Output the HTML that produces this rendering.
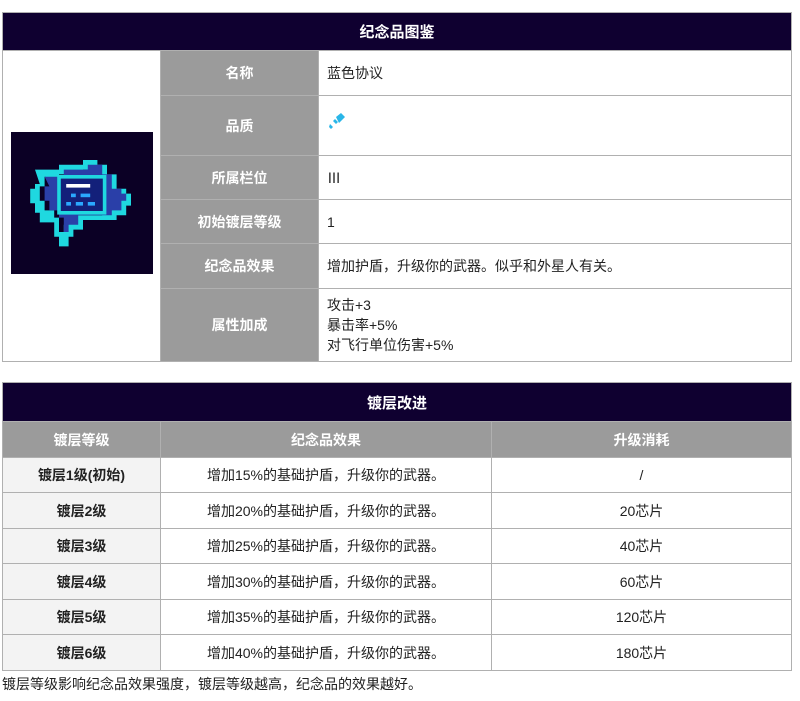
<!DOCTYPE html>
<html><head><meta charset="utf-8"><style>
body{margin:0;width:800px;height:701px;background:#fff;font-family:"Liberation Sans","Noto Sans CJK SC",sans-serif;font-size:14px;color:#222;position:relative;overflow:hidden}
table{border-collapse:collapse;position:absolute;left:2px;width:790px;table-layout:fixed}
td,th{border:1px solid #b0b0b0;padding:0}
.h{background:#0f0030;color:#fff;font-weight:bold;font-size:15px;text-align:center}
.l{background:#9b9b9b;color:#fff;font-weight:bold;text-align:center}
.v{padding-left:8px}
.f{background:#f3f3f3;font-weight:bold;text-align:center}
.c{text-align:center}
</style></head><body>
<table style="top:12px">
<col style="width:158px"><col style="width:158px"><col>
<tr style="height:38px"><td class="h" colspan="3">纪念品图鉴</td></tr>
<tr style="height:45px"><td rowspan="6" style="position:relative">
<svg style="position:absolute;left:8px;top:81px" width="142" height="142" viewBox="0 0 142 142">
<rect width="142" height="142" fill="#0b0025"/>
<g transform="translate(-12,-20) scale(1.2)">
<g fill="#1fd8e0">
<path d="M30 48h20v-4h20v-4h12v4h8v8h8v12h8v4h4v10h-4v8h-8v4h-28v8h-8v6h-4v8h-8v-8h-4v-12h-12v-8h-4v-8h-4v-12h4v-4h4z M38 54v8h-4v12h4v8h8v6h4v12h4v-6h4v-8h28v-4h8v-8h4v-6h-4v-4h-8v-12h-8v-4h-8v4h-20v4z"/>
</g>
<path d="M38 54h16v-6h20v-4h12v8h8v12h8v4h4v6h-4v8h-8v4h-28v8h-8v6h-4v-12h-4v-6h-8v-8h-4v-12h4z" fill="#2a3fa8"/>
<rect x="50" y="54" width="38" height="30" fill="#13207a" stroke="#1fd8e0" stroke-width="3"/>
<rect x="56" y="60" width="20" height="3" fill="#fff"/>
<g fill="#2aa8ff"><rect x="60" y="68" width="4" height="3"/><rect x="68" y="68" width="8" height="3"/><rect x="56" y="75" width="4" height="3"/><rect x="64" y="75" width="6" height="3"/><rect x="74" y="75" width="6" height="3"/></g>
</g>
</svg></td>
<td class="l">名称</td><td class="v">蓝色协议</td></tr>
<tr style="height:60px"><td class="l">品质</td><td class="v"><svg width="20" height="20" viewBox="0 0 20 20" style="margin-top:-10px"><path d="M9 6l5-4 4 4-6 6z M6 10l2-2 3 3-2 2z" fill="#29b6e8"/><path d="M3 13l3 3-2 2-2-2z" fill="#29b6e8"/></svg></td></tr>
<tr style="height:44px"><td class="l">所属栏位</td><td class="v">Ⅲ</td></tr>
<tr style="height:44px"><td class="l">初始镀层等级</td><td class="v">1</td></tr>
<tr style="height:45px"><td class="l">纪念品效果</td><td class="v">增加护盾，升级你的武器。似乎和外星人有关。</td></tr>
<tr style="height:73px"><td class="l">属性加成</td><td class="v" style="line-height:20px">攻击+3<br>暴击率+5%<br>对飞行单位伤害+5%</td></tr>
</table>
<table style="top:382px">
<col style="width:158px"><col style="width:331px"><col>
<tr style="height:39px"><td class="h" colspan="3">镀层改进</td></tr>
<tr style="height:36px"><td class="l">镀层等级</td><td class="l">纪念品效果</td><td class="l">升级消耗</td></tr>
<tr style="height:35px"><td class="f">镀层1级(初始)</td><td class="c">增加15%的基础护盾，升级你的武器。</td><td class="c">/</td></tr>
<tr style="height:36px"><td class="f">镀层2级</td><td class="c">增加20%的基础护盾，升级你的武器。</td><td class="c">20芯片</td></tr>
<tr style="height:35px"><td class="f">镀层3级</td><td class="c">增加25%的基础护盾，升级你的武器。</td><td class="c">40芯片</td></tr>
<tr style="height:36px"><td class="f">镀层4级</td><td class="c">增加30%的基础护盾，升级你的武器。</td><td class="c">60芯片</td></tr>
<tr style="height:35px"><td class="f">镀层5级</td><td class="c">增加35%的基础护盾，升级你的武器。</td><td class="c">120芯片</td></tr>
<tr style="height:36px"><td class="f">镀层6级</td><td class="c">增加40%的基础护盾，升级你的武器。</td><td class="c">180芯片</td></tr>
</table>
<div style="position:absolute;left:2px;top:674px">镀层等级影响纪念品效果强度，镀层等级越高，纪念品的效果越好。</div>
</body></html>
